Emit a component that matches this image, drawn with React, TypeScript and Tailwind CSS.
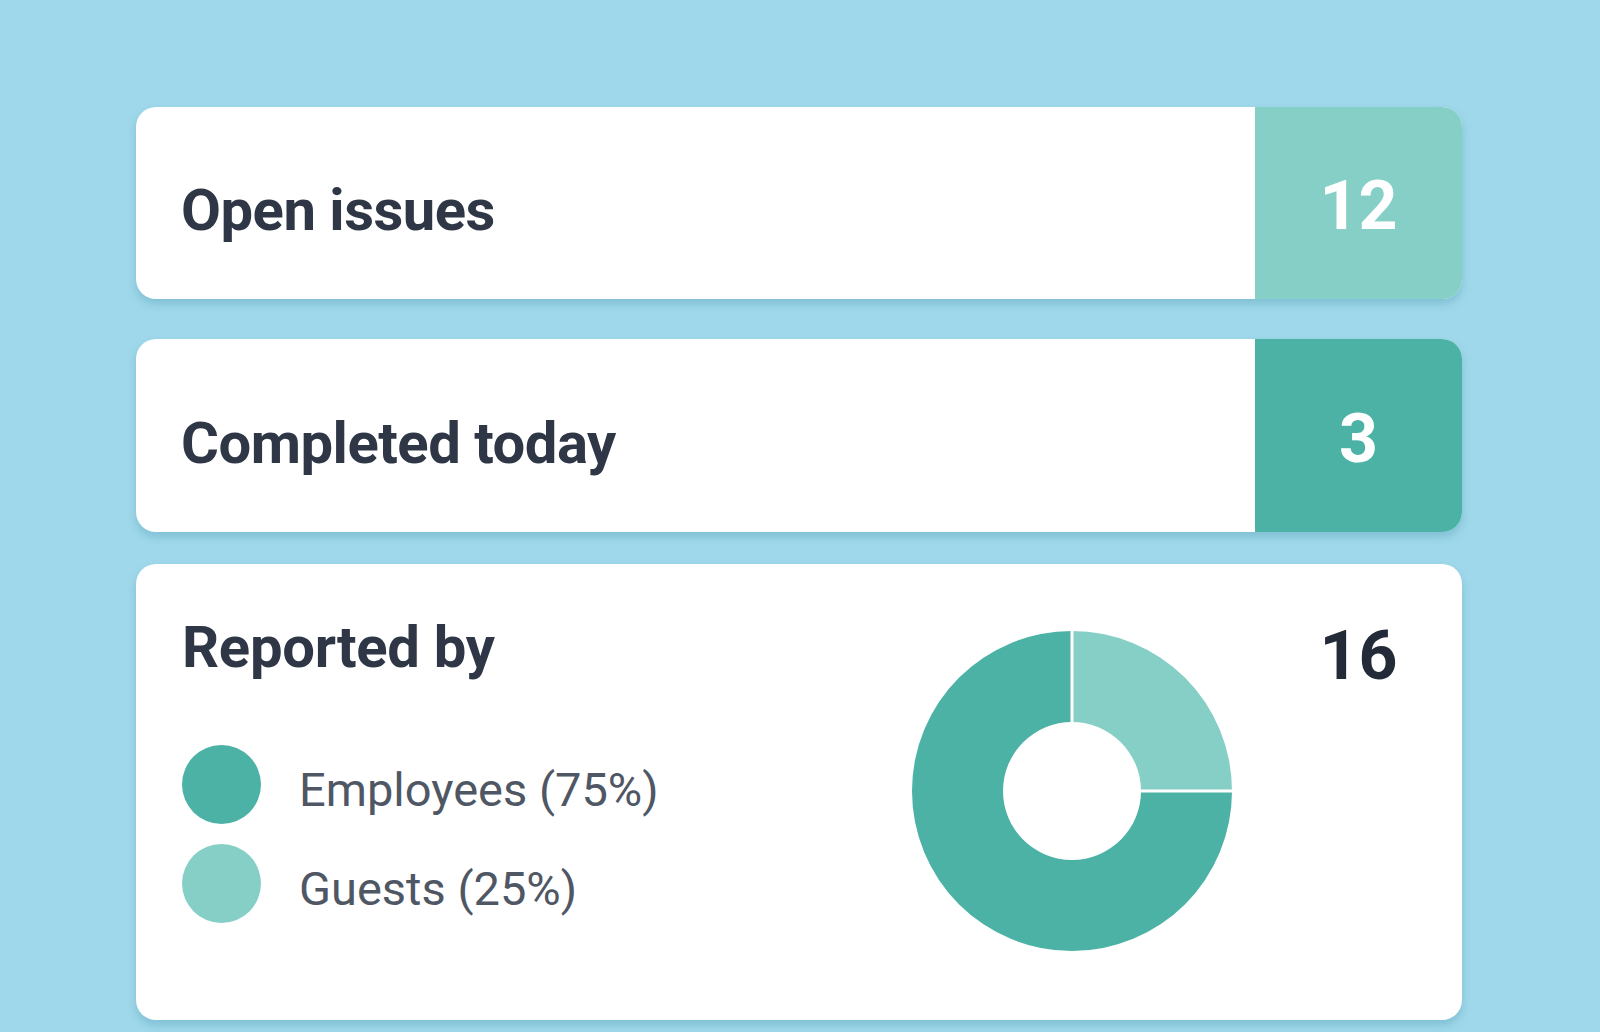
import React from 'react';

// ─── Data ────────────────────────────────────────────────────────────────────

const STATS = [
  { label: 'Open issues', value: 12, box: 'bg-[#86cfc6]' },
  { label: 'Completed today', value: 3, box: 'bg-[#4cb2a6]' },
];

const REPORTERS = [
  { label: 'Employees (75%)', dot: 'bg-[#4cb2a6]' },
  { label: 'Guests (25%)', dot: 'bg-[#86cfc6]' },
];

// ─── Donut ───────────────────────────────────────────────────────────────────

const Donut: React.FC = () => (
  <svg width={322} height={322} viewBox="0 0 322 322">
    {/* guests: 12 → 3 o'clock */}
    <path d="M161 1 A160 160 0 0 1 321 161 L230 161 A69 69 0 0 0 161 92 Z" fill="#86cfc6" />
    {/* employees: the remaining three quarters */}
    <path d="M321 161 A160 160 0 1 1 161 1 L161 92 A69 69 0 1 0 230 161 Z" fill="#4cb2a6" />
    <line x1={161} y1={0} x2={161} y2={94} stroke="#fff" strokeWidth={3} />
    <line x1={228} y1={161} x2={322} y2={161} stroke="#fff" strokeWidth={3} />
  </svg>
);

// ─── Page ────────────────────────────────────────────────────────────────────

export default function App() {
  return (
    <div className="w-full h-[1032px] bg-[#9fd8ea] pl-[136px] pt-[107px] font-['Roboto','Liberation_Sans',sans-serif]">
      <div className="w-[1326px] flex flex-col">
        {STATS.map((s, i) => (
          <div
            key={s.label}
            className={`flex rounded-[20px] bg-white overflow-hidden shadow-[0_5px_8px_rgba(40,120,150,0.25)] ${
              i === 0 ? 'h-[192px] mb-[40px]' : 'h-[193px] mb-[32px]'
            }`}
          >
            <div className="flex-1 flex items-center pl-[45px] pt-[14px]">
              <span className="text-[58px] font-bold text-[#2f3747] leading-none tracking-[-0.5px]">{s.label}</span>
            </div>
            <div className={`w-[207px] ${s.box} flex items-center justify-center pt-[6px]`}>
              <span className="text-[68px] font-bold text-white leading-none">{s.value}</span>
            </div>
          </div>
        ))}

        {/* Reported by */}
        <div className="flex h-[456px] rounded-[20px] bg-white shadow-[0_5px_8px_rgba(40,120,150,0.25)]">
          <div className="flex-1 pl-[46px] pt-[54px]">
            <h2 className="text-[58px] font-bold text-[#2f3747] leading-none tracking-[-0.3px]">Reported by</h2>
            <ul className="mt-[69px] flex flex-col gap-[20px]">
              {REPORTERS.map(r => (
                <li key={r.label} className="flex items-center gap-[38px]">
                  <span className={`w-[79px] h-[79px] rounded-full ${r.dot} shrink-0`} />
                  <span className="text-[47px] text-[#4f5764] leading-none pt-[10px]">{r.label}</span>
                </li>
              ))}
            </ul>
          </div>
          <div className="pt-[66px] mr-[22px]">
            <Donut />
          </div>
          <div className="w-[207px] flex justify-center pt-[58px]">
            <span className="text-[68px] font-bold text-[#232b38] leading-none">16</span>
          </div>
        </div>
      </div>
    </div>
  );
}
